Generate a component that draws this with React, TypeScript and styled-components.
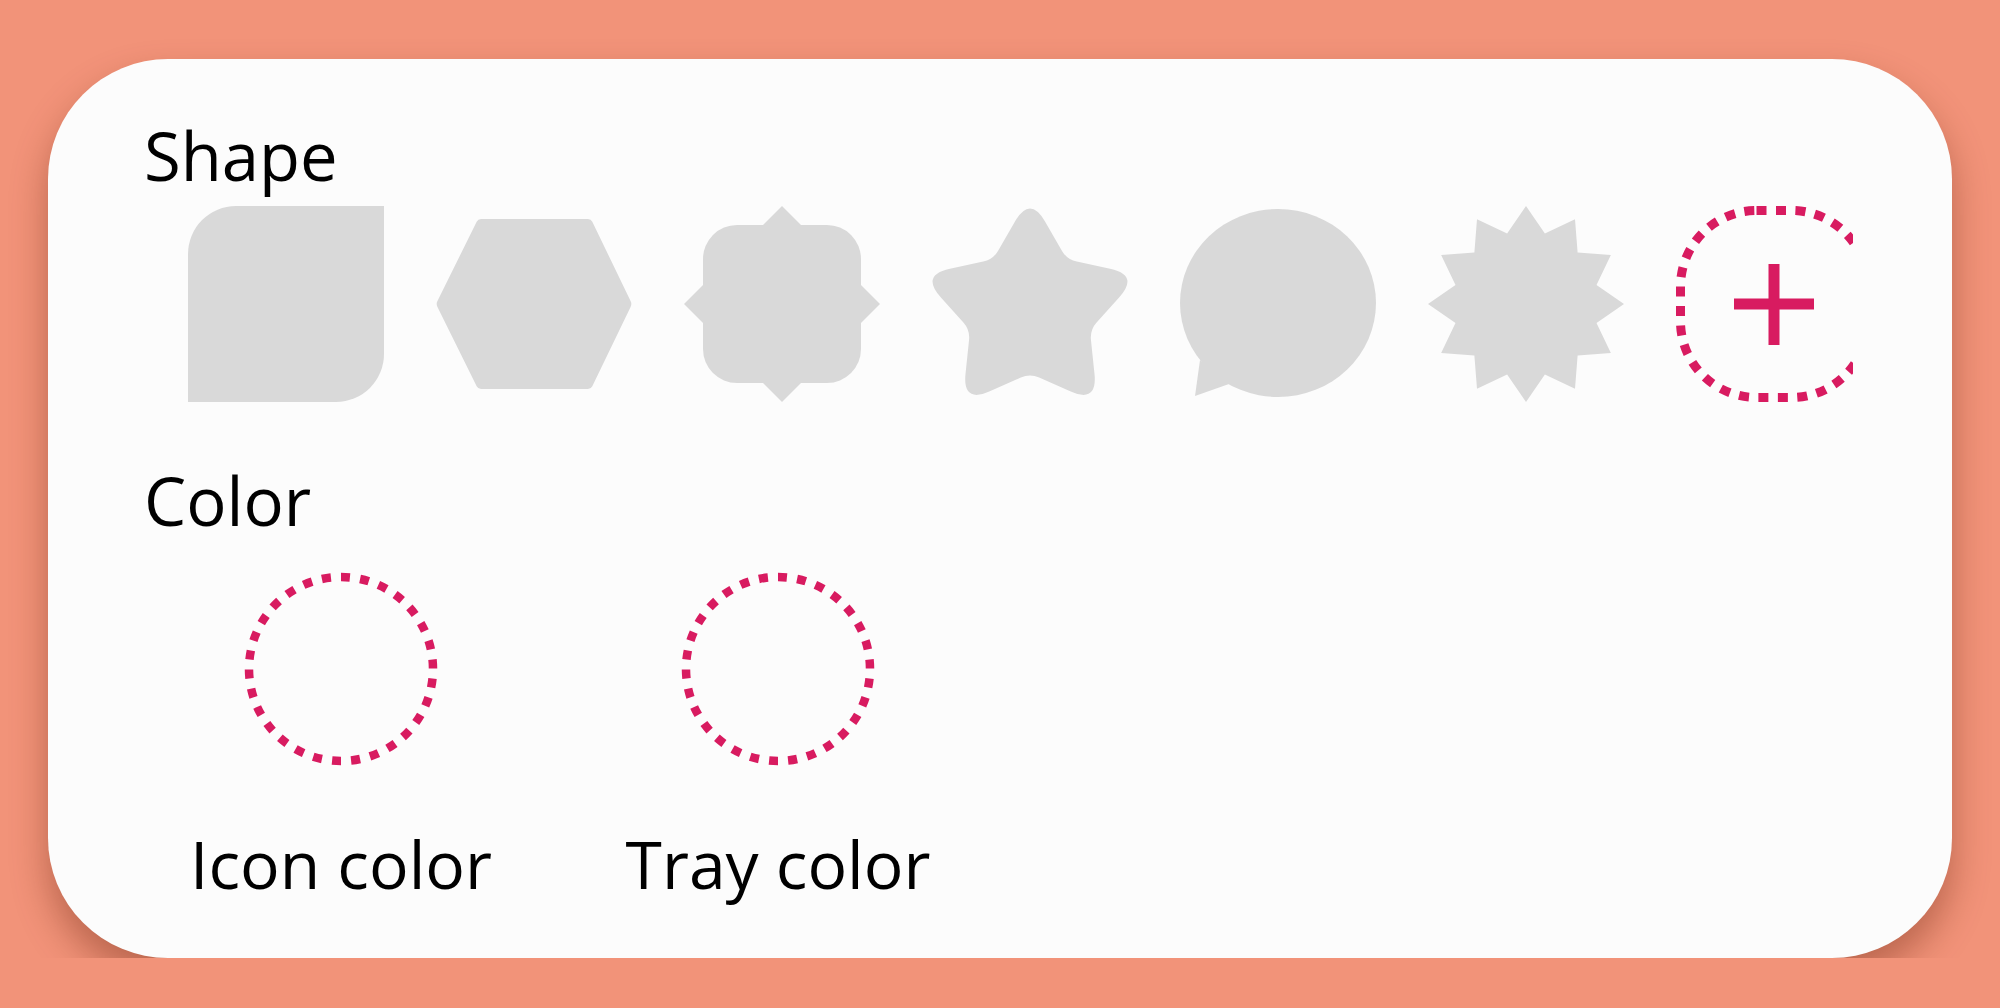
import React from 'react';
import styled, { createGlobalStyle } from 'styled-components';

const GlobalStyle = createGlobalStyle`
  html, body {
    margin: 0;
    padding: 0;
    background: #f29379;
  }

  body {
    font-family: 'Open Sans', 'Noto Sans', sans-serif;
    color: #000000;
  }
`;

type Point = [number, number];

// rounds every corner of a polygon with a quadratic curve, r = distance along each edge
const roundedPolygon = (pts: Point[], radii: number[]) => {
  const n = pts.length;
  let d = '';
  for (let i = 0; i < n; i++) {
    const v = pts[i];
    const p = pts[(i - 1 + n) % n];
    const q = pts[(i + 1) % n];
    const r = radii[i % radii.length];
    const lp = Math.hypot(p[0] - v[0], p[1] - v[1]);
    const lq = Math.hypot(q[0] - v[0], q[1] - v[1]);
    const a: Point = [v[0] + ((p[0] - v[0]) * r) / lp, v[1] + ((p[1] - v[1]) * r) / lp];
    const b: Point = [v[0] + ((q[0] - v[0]) * r) / lq, v[1] + ((q[1] - v[1]) * r) / lq];
    d += `${i === 0 ? 'M' : 'L'}${a[0].toFixed(2)},${a[1].toFixed(2)} `;
    d += `Q${v[0].toFixed(2)},${v[1].toFixed(2)} ${b[0].toFixed(2)},${b[1].toFixed(2)} `;
  }
  return d + 'Z';
};

const radialPoints = (count: number, outer: number, inner: number, cx: number, cy: number) => {
  const pts: Point[] = [];
  for (let k = 0; k < count * 2; k++) {
    const angle = (k * Math.PI) / count;
    const rad = k % 2 === 0 ? outer : inner;
    pts.push([cx + rad * Math.sin(angle), cy - rad * Math.cos(angle)]);
  }
  return pts;
};

const hexagonPath = roundedPolygon(
  [
    [0, 98],
    [42, 13],
    [155, 13],
    [196, 98],
    [155, 183],
    [42, 183],
  ],
  [3]
);

const starPath = roundedPolygon(radialPoints(5, 115, 63, 98, 104.5), [30, 10]);

const burstPoints = radialPoints(12, 98, 73, 98, 98)
  .map(([x, y]) => `${x.toFixed(2)},${y.toFixed(2)}`)
  .join(' ');

const SHAPE_GREY = '#d9d9d9';
const PINK = '#d81b60';

const Card = styled.div`
  box-sizing: border-box;
  width: 1904px;
  margin: 59px 0 0 48px;
  padding: 56px 99px 55px 96px;
  background: #fcfcfc;
  border-radius: 120px;
  box-shadow: 0 20px 36px rgba(110, 40, 20, 0.42);
`;

const SectionTitle = styled.div<{ $gap?: number }>`
  margin-top: ${(p) => p.$gap ?? 0}px;
  font-size: 67px;
  line-height: 80px;
  font-weight: 400;
  color: #000000;
`;

const ShapeRow = styled.div`
  display: flex;
  gap: 52px;
  margin: 11px 0 0 44px;
  overflow: hidden;
`;

const ShapeTile = styled.svg`
  flex-shrink: 0;
  width: 196px;
  height: 196px;
  display: block;
  overflow: visible;
`;

const ColorRow = styled.div`
  display: flex;
  gap: 97px;
  margin-top: 31px;
  padding-left: 27px;
`;

const ColorItem = styled.div`
  width: 340px;
  display: flex;
  flex-direction: column;
  align-items: center;
  gap: 56px;
`;

const Swatch = styled.svg`
  width: 196px;
  height: 196px;
  display: block;
`;

const ColorLabel = styled.div`
  font-size: 66px;
  line-height: 80px;
  white-space: nowrap;
  color: #000000;
`;

const shapes = [
  <path key="sq" d="M48,0 H196 V148 A48,48 0 0 1 148,196 H0 V48 A48,48 0 0 1 48,0 Z" fill={SHAPE_GREY} />,
  <path key="hex" d={hexagonPath} fill={SHAPE_GREY} />,
  <g key="badge" fill={SHAPE_GREY}>
    <rect x="19" y="19" width="158" height="158" rx="34" />
    <polygon points="98,0 196,98 98,196 0,98" />
  </g>,
  <path key="star" d={starPath} fill={SHAPE_GREY} />,
  <g key="bubble" fill={SHAPE_GREY}>
    <ellipse cx="98" cy="97" rx="98" ry="94" />
    <polygon points="20,154 15,190 49,178" />
  </g>,
  <polygon key="burst" points={burstPoints} fill={SHAPE_GREY} />,
];

const ColorSwatch = ({ label }: { label: string }) => (
  <ColorItem>
    <Swatch viewBox="0 0 196 196">
      <circle
        cx="98"
        cy="98"
        r="92"
        fill="none"
        stroke={PINK}
        strokeWidth="8.5"
        pathLength={30}
        strokeDasharray="0.47 0.53"
        transform="rotate(-90 98 98)"
      />
    </Swatch>
    <ColorLabel>{label}</ColorLabel>
  </ColorItem>
);

const App = () => {
  return (
    <>
      <GlobalStyle />
      <Card>
        <SectionTitle>Shape</SectionTitle>
        <ShapeRow>
          {shapes.map((shape, i) => (
            <ShapeTile key={i} viewBox="0 0 196 196">
              {shape}
            </ShapeTile>
          ))}
          <ShapeTile viewBox="0 0 196 196">
            <rect
              x="4.5"
              y="4.5"
              width="187"
              height="187"
              rx="76"
              fill="none"
              stroke={PINK}
              strokeWidth="9"
              strokeDasharray="10 9.5"
            />
            <path d="M98,58 V139 M58,98 H138" stroke={PINK} strokeWidth="11" fill="none" />
          </ShapeTile>
        </ShapeRow>
        <SectionTitle $gap={58}>Color</SectionTitle>
        <ColorRow>
          <ColorSwatch label="Icon color" />
          <ColorSwatch label="Tray color" />
        </ColorRow>
      </Card>
    </>
  );
};

export default App;
